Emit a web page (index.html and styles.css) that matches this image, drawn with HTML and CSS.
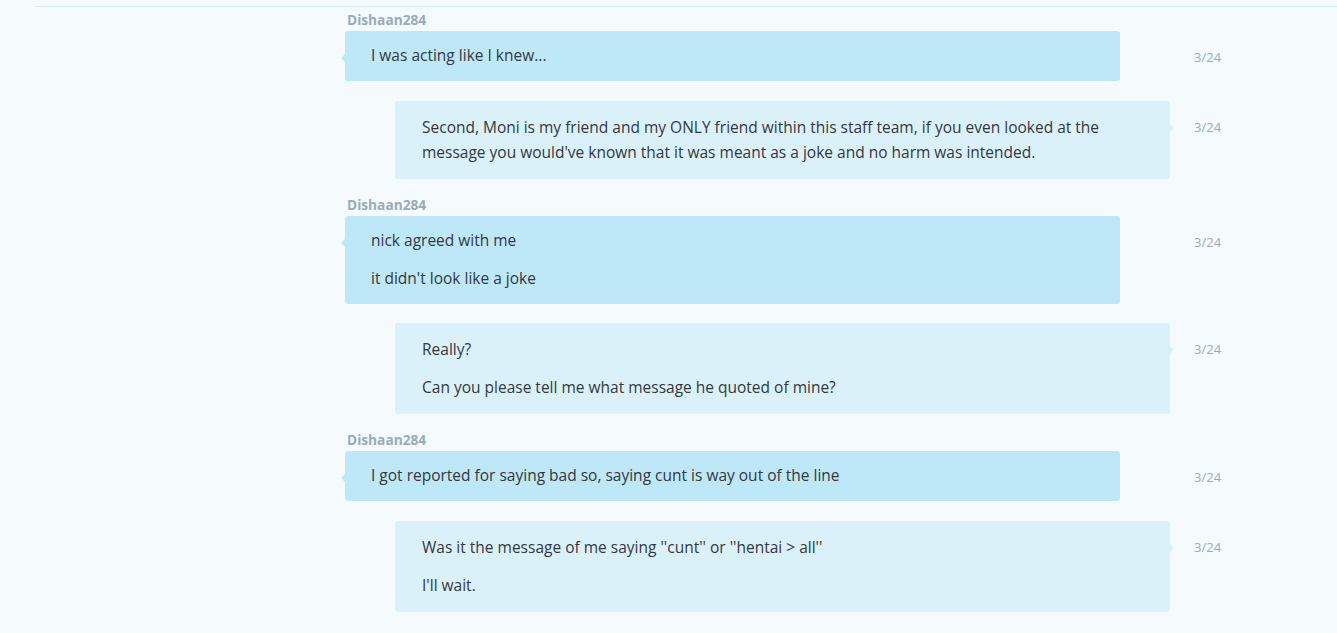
FILE: index.html
```html
<!DOCTYPE html>
<html>
<head>
<meta charset="utf-8">
<link rel="stylesheet" href="styles.css">
</head>
<body>
<div class="topline"></div>
<div class="thread">
  <div class="group">
    <div class="author">Dishaan284</div>
    <div class="row them">
      <div class="bubble"><p>I was acting like I knew...</p></div>
      <div class="time">3/24</div>
    </div>
    <div class="row me">
      <div class="bubble"><p>Second, Moni is my friend and my ONLY friend within this staff team, if you even looked at the message you would've known that it was meant as a joke and no harm was intended.</p></div>
      <div class="time">3/24</div>
    </div>
  </div>
  <div class="group">
    <div class="author">Dishaan284</div>
    <div class="row them">
      <div class="bubble"><p>nick agreed with me</p><p>it didn't look like a joke</p></div>
      <div class="time">3/24</div>
    </div>
    <div class="row me">
      <div class="bubble"><p>Really?</p><p>Can you please tell me what message he quoted of mine?</p></div>
      <div class="time">3/24</div>
    </div>
  </div>
  <div class="group">
    <div class="author">Dishaan284</div>
    <div class="row them">
      <div class="bubble"><p>I got reported for saying bad so, saying cunt is way out of the line</p></div>
      <div class="time">3/24</div>
    </div>
    <div class="row me">
      <div class="bubble"><p>Was it the message of me saying ''cunt'' or ''hentai &gt; all''</p><p>I'll wait.</p></div>
      <div class="time">3/24</div>
    </div>
  </div>
</div>
</body>
</html>
```
FILE: styles.css
```css
html, body {
  margin: 0;
  padding: 0;
  background: #f5fafd;
  font-family: "Open Sans", "Noto Sans", sans-serif;
  color: #33383d;
}
.topline {
  margin: 6px 0 0 35px;
  border-top: 1px solid #dbe9f1;
}
.thread {
  padding: 4px 0 0 345px;
}
.group {
  margin-bottom: 17px;
}
.author {
  padding-left: 2px;
  font-size: 13.7px;
  line-height: 18px;
  font-weight: 700;
  color: #97acb8;
  margin-bottom: 2px;
}
.row {
  display: flex;
  align-items: flex-start;
  width: 900px;
}
.row + .row {
  margin-top: 19.5px;
}
.bubble {
  position: relative;
  width: 775px;
  box-sizing: border-box;
  border-radius: 3px;
  font-size: 15.5px;
  line-height: 25px;
}
.bubble p {
  margin: 0;
}
.bubble p + p {
  margin-top: 13px;
}
.them .bubble {
  background: #bee8f8;
  padding: 12px 27px 13px 26px;
  margin-right: 74px;
}
.me .bubble {
  background: #dbf1fa;
  padding: 14px 50px 14px 27px;
  margin-left: 50px;
  margin-right: 24px;
}
.bubble::before {
  content: "";
  position: absolute;
  top: 23px;
  border-top: 4px solid transparent;
  border-bottom: 4px solid transparent;
}
.them .bubble::before {
  left: -4px;
  border-right: 4px solid #bee8f8;
}
.me .bubble::before {
  right: -4px;
  border-left: 4px solid #dbf1fa;
}
.time {
  font-size: 13px;
  line-height: 25px;
  padding-top: 14px;
  color: #9aacb7;
}
```
